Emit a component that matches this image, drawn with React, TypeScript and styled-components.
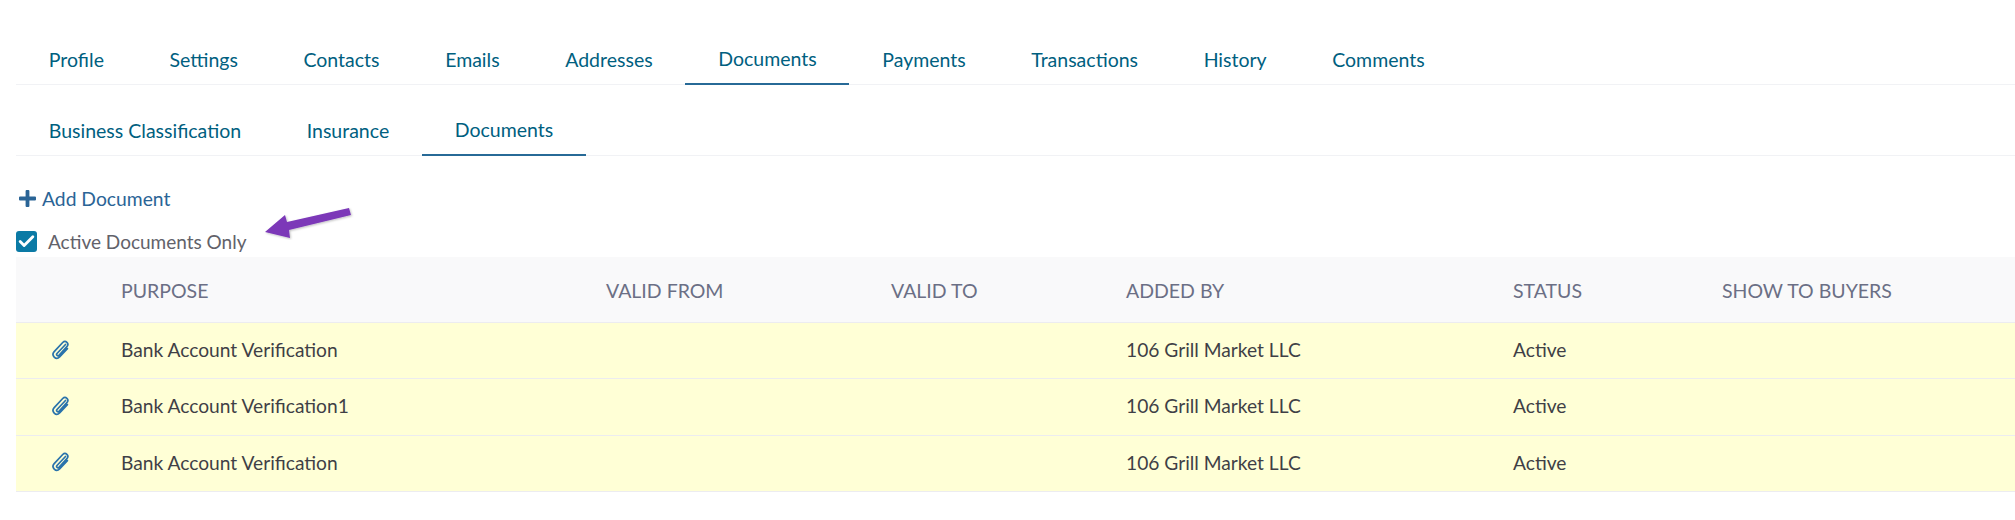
import React from "react";
import styled, { createGlobalStyle } from "styled-components";
import { Check } from "lucide-react";

const Global = createGlobalStyle`
  html, body { margin: 0; padding: 0; background: #fff; }
  body { font-family: "Lato", "Open Sans", sans-serif; overflow: hidden; }
`;

const Page = styled.div`
  position: relative;
  width: 2015px;
  height: 520px;
  padding: 34px 0 0 16px;
  box-sizing: border-box;
`;

const TabBar = styled.div<{ $mb: number }>`
  display: flex;
  height: 50px;
  border-bottom: 1px solid #f1f2f5;
  margin-bottom: ${(p) => p.$mb}px;
`;

const Tab = styled.div<{ $active?: boolean }>`
  padding: 0 32.8px;
  height: 51px;
  display: flex;
  align-items: center;
  font-size: 19.5px;
  color: #00607f;
  box-sizing: border-box;
  border-bottom: ${(p) => (p.$active ? "2px solid #276a97" : "none")};
  position: relative;
  z-index: 1;
`;

const AddLink = styled.div`
  display: flex;
  align-items: center;
  gap: 6px;
  height: 24px;
  margin: 30px 0 0 3px;
  font-size: 19.3px;
  color: #2a6496;
`;

const CheckRow = styled.label`
  display: flex;
  align-items: center;
  gap: 11px;
  height: 24px;
  margin-top: 19px;
  font-size: 19px;
  color: #62626a;
`;

const Box = styled.span`
  width: 21px;
  height: 21px;
  border-radius: 3px;
  background: #0b7aa5;
  display: flex;
  align-items: center;
  justify-content: center;
  color: #fff;
`;

const Row = styled.div<{ $head?: boolean }>`
  display: grid;
  grid-template-columns: 105px 485px 285px 235px 387px 209px 1fr;
  align-items: center;
  box-sizing: content-box;
  height: ${(p) => (p.$head ? 63 : 53.33)}px;
  padding: ${(p) => (p.$head ? "2px 0 0" : "0 0 2px")};
  font-size: ${(p) => (p.$head ? 19.5 : 19.2)}px;
  background: ${(p) => (p.$head ? "#f9f9fa" : "#ffffd6")};
  color: ${(p) => (p.$head ? "#6b6f85" : "#3f3f46")};
  border-bottom: 1px solid #ececf0;
`;

const Table = styled.div`
  margin-top: 4px;
`;

const Clip = styled.span`
  display: flex;
  justify-content: flex-start;
  padding-left: 35px;
  color: #2a73ab;
`;

const Arrow = styled.svg`
  position: absolute;
  left: 255px;
  top: 200px;
`;

const main = ["Profile", "Settings", "Contacts", "Emails", "Addresses", "Documents", "Payments", "Transactions", "History", "Comments"];
const sub = ["Business Classification", "Insurance", "Documents"];
const heads = ["", "PURPOSE", "VALID FROM", "VALID TO", "ADDED BY", "STATUS", "SHOW TO BUYERS"];
const rows = ["Bank Account Verification", "Bank Account Verification1", "Bank Account Verification"];

const PaperClip = () => (
  <svg width="19" height="20" viewBox="0 0 19 20" fill="none" stroke="currentColor" strokeWidth="1.7" strokeLinecap="round">
    <path d="M14.5 4.5 L6 13.5 C4.8 15 6.8 16.6 8 15.3 L15.9 6.6 C18.6 3.5 14.6 -0.4 11.7 2.5 L3.2 11.6 C-0.2 15.3 4.9 20.6 8.6 17 L16.4 8.6" />
  </svg>
);

const PlusMark = () => (
  <svg width="17" height="17" viewBox="0 0 17 17" fill="currentColor">
    <path d="M6.6 1 a1 1 0 0 1 1-1 h1.8 a1 1 0 0 1 1 1 v5.6 h5.6 a1 1 0 0 1 1 1 v1.8 a1 1 0 0 1-1 1 h-5.6 v5.6 a1 1 0 0 1-1 1 h-1.8 a1 1 0 0 1-1-1 v-5.6 h-5.6 a1 1 0 0 1-1-1 v-1.8 a1 1 0 0 1 1-1 h5.6 z" />
  </svg>
);

export default function App() {
  return (
    <Page>
      <Global />
      <TabBar $mb={20}>
        {main.map((t) => (
          <Tab key={t} $active={t === "Documents"}>{t}</Tab>
        ))}
      </TabBar>
      <TabBar $mb={0}>
        {sub.map((t) => (
          <Tab key={t} $active={t === "Documents"}>{t}</Tab>
        ))}
      </TabBar>
      <AddLink>
        <PlusMark />
        Add Document
      </AddLink>
      <CheckRow>
        <Box><Check size={19} strokeWidth={3.6} /></Box>
        Active Documents Only
      </CheckRow>
      <Table>
        <Row $head>
          {heads.map((h, i) => <span key={i}>{h}</span>)}
        </Row>
        {rows.map((r, i) => (
          <Row key={i}>
            <Clip><PaperClip /></Clip>
            <span>{r}</span>
            <span />
            <span />
            <span>106 Grill Market LLC</span>
            <span>Active</span>
            <span />
          </Row>
        ))}
      </Table>
      <Arrow width="100" height="40" viewBox="255 200 100 40">
        <defs>
          <filter id="sh" x="-20%" y="-40%" width="140%" height="180%">
            <feDropShadow dx="1" dy="1" stdDeviation="1" floodColor="#000" floodOpacity="0.25" />
          </filter>
        </defs>
        <polygon
          points="265,232 285,215 287,222 349,208 351,215 289,230 290,238"
          fill="#7b38b8"
          filter="url(#sh)"
        />
      </Arrow>
    </Page>
  );
}
